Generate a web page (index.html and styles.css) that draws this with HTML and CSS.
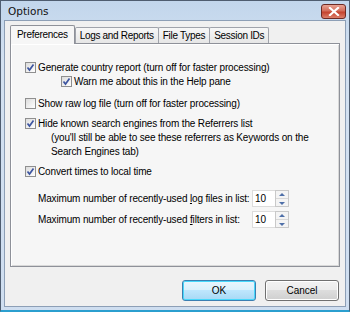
FILE: index.html
```html
<!DOCTYPE html>
<html lang="en">
<head>
  <meta charset="UTF-8" />
  <title>Options</title>
  <link rel="stylesheet" href="styles.css">
</head>
<body>
  <div class="window">
    <div class="titlebar">
      <span class="title">Options</span>
      <div class="close-btn">
        <svg width="12" height="9" viewBox="0 0 12 9"><path d="M2 1 L10 8 M10 1 L2 8" stroke="#fff" stroke-width="2.2" stroke-linecap="square"/></svg>
      </div>
    </div>

    <div class="client">
      <div class="tabs">
        <div class="tab selected">Preferences</div>
        <div class="tab">Logs and Reports</div>
        <div class="tab">File Types</div>
        <div class="tab">Session IDs</div>
      </div>

      <div class="panel">
        <label class="row r1"><span class="cb on"></span>Generate country report (turn off for faster processing)</label>
        <label class="row sub"><span class="cb on"></span>Warn me about this in the Help pane</label>
        <label class="row r3"><span class="cb"></span>Show raw log file (turn off for faster processing)</label>
        <div class="row r4">
          <span class="cb on"></span>
          <div class="multi">
            <div>Hide known search engines from the Referrers list</div>
            <div class="indent">(you'll still be able to see these referrers as Keywords on the</div>
            <div class="indent">Search Engines tab)</div>
          </div>
        </div>
        <label class="row r5"><span class="cb on"></span>Convert times to local time</label>

        <div class="spin-row first">
          <span class="spin-label">Maximum number of recently-used <u>l</u>og files in list:</span>
          <div class="spin"><span class="spin-val">10</span><span class="arrows"><span class="up"></span><span class="down"></span></span></div>
        </div>
        <div class="spin-row">
          <span class="spin-label">Maximum number of recently-used <u>f</u>ilters in list:</span>
          <div class="spin"><span class="spin-val">10</span><span class="arrows"><span class="up"></span><span class="down"></span></span></div>
        </div>
      </div>

      <div class="buttons">
        <button class="btn default">OK</button>
        <button class="btn">Cancel</button>
      </div>
    </div>
  </div>
</body>
</html>
```

FILE: styles.css
```css
body {
  margin: 0;
  padding: 0;
  font-family: 'Liberation Sans', Arial, sans-serif;
  font-size: 10px;
  letter-spacing: -0.15px;
  color: black;
  background: #fff;
}

.window {
  width: 350px;
  height: 312px;
  box-sizing: border-box;
  border: 1px solid #4f5d70;
  border-bottom: 2px solid #2b9fcf;
  background: linear-gradient(#c2d6ec, #d3e1f1 60px, #cfdef0);
  padding: 0 3px 3px 3px;
  display: flex;
  flex-direction: column;
}

.titlebar {
  height: 19px;
  display: flex;
  align-items: center;
  justify-content: space-between;
  padding-left: 4px;
}

.title {
  font-family: 'DejaVu Sans', sans-serif;
  font-size: 10.5px;
  letter-spacing: 0;
  color: #111;
}

.close-btn {
  width: 23px;
  height: 13px;
  margin-top: 2px;
  border: 1px solid #6d2a24;
  border-radius: 3px;
  background: linear-gradient(#e9a394, #d36d5b 45%, #c4432f 55%, #dc7f6b);
  display: flex;
  align-items: center;
  justify-content: center;
}

.client {
  flex: 1;
  background: #f0f0f0;
  border: 1px solid #8d9fb6;
  padding: 4px 5px 0 5px;
  display: flex;
  flex-direction: column;
}

.tabs {
  display: flex;
  align-items: flex-end;
  height: 18px;
  position: relative;
  z-index: 1;
}

.tab {
  height: 15px;
  line-height: 15px;
  padding: 0 4px;
  letter-spacing: -0.3px;
  border: 1px solid #a0a3ab;
  border-bottom: none;
  border-radius: 2px 2px 0 0;
  background: linear-gradient(#f7f7f7, #e6e6e6);
  margin-left: -1px;
}

.tab.selected {
  height: 18px;
  line-height: 17px;
  padding: 0 6px;
  margin-left: 0;
  margin-right: 1px;
  background: #f6f6f6;
  border-color: #8e9199;
  margin-bottom: -1px;
}

.panel {
  height: 224px;
  box-sizing: border-box;
  border: 1px solid #8e9199;
  box-shadow: 1px 1px 0 #fff inset, -1px -1px 0 #d8d8d8 inset;
  background: #f6f6f6;
  padding: 17px 0 0 14px;
  white-space: nowrap;
}

.row {
  display: flex;
  align-items: flex-start;
  line-height: 14px;
}

.cb {
  width: 11px;
  height: 11px;
  box-sizing: border-box;
  border: 1px solid #8f8f8f;
  background: linear-gradient(135deg, #dcdcdc, #fff);
  margin: 1px 2px 0 0;
  flex: none;
}

.cb.on {
  background-image: url("data:image/svg+xml,%3Csvg xmlns='http://www.w3.org/2000/svg' width='9' height='9'%3E%3Cpath d='M1.5 4.5 L3.5 7 L7.5 1.5' fill='none' stroke='%233d55a0' stroke-width='1.7'/%3E%3C/svg%3E"), linear-gradient(135deg, #dcdcdc, #fff);
  background-repeat: no-repeat;
  background-position: center;
}

.row.sub {
  padding-left: 36px;
}

.row.r3 {
  margin-top: 8px;
}

.row.r4 {
  margin-top: 6px;
}

.multi .indent {
  padding-left: 13px;
}

.row.r5 {
  margin-top: 6px;
}

.spin-row {
  display: flex;
  align-items: center;
  padding-left: 13px;
  height: 17px;
  margin-top: 4px;
}

.spin-row.first {
  margin-top: 11px;
}

.spin-label {
  width: 214px;
}

.spin {
  display: flex;
  height: 17px;
}

.spin-val {
  width: 20px;
  height: 15px;
  line-height: 16px;
  padding-left: 2px;
  background: #fff;
  border: 1px solid #dcdcdc;
  border-right: none;
}

.arrows {
  display: flex;
  flex-direction: column;
  width: 12px;
  border: 1px solid #c9c9c9;
  background: #f4f4f4;
}

.arrows .up, .arrows .down {
  flex: 1;
  position: relative;
}

.arrows .up {
  border-bottom: 1px solid #d8d8d8;
}

.arrows .up::after, .arrows .down::after {
  content: "";
  position: absolute;
  left: 3px;
  top: 2px;
  border-left: 3px solid transparent;
  border-right: 3px solid transparent;
}

.arrows .up::after {
  border-bottom: 3px solid #4e6fa8;
}

.arrows .down::after {
  border-top: 3px solid #4e6fa8;
  top: 3px;
}

.buttons {
  display: flex;
  justify-content: flex-end;
  gap: 9px;
  margin-top: 13px;
  padding-right: 1px;
}

.btn {
  width: 74px;
  height: 21px;
  font-family: 'Liberation Sans', Arial, sans-serif;
  font-size: 10px;
  border: 1px solid #707070;
  border-radius: 3px;
  background: linear-gradient(#f2f2f2, #ebebeb 50%, #dddddd 50%, #cfcfcf);
  box-shadow: 0 0 0 1px #fff inset;
  color: black;
  padding: 0;
}

.btn.default {
  border-color: #3c7fb1;
  box-shadow: 0 0 0 1px #48d8fb inset;
  background: linear-gradient(#eaf6fd, #d9f0fc 50%, #bee6fd 50%, #a7d9f5);
}
```
